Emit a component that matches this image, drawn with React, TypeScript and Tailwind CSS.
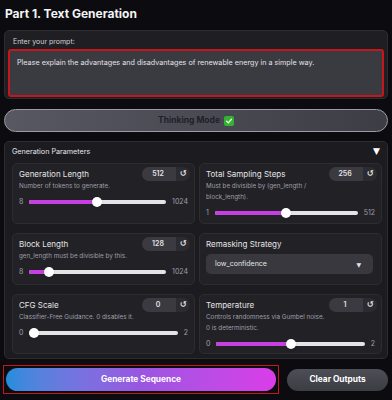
const font = { fontFamily: 'Inter, "Noto Sans", sans-serif' };

function NumPill({ value }: { value: string }) {
  return (
    <div className="flex h-[14px] w-[48px] shrink-0 overflow-hidden rounded-full text-[7px] font-semibold text-zinc-200">
      <div className="flex flex-1 items-center justify-center bg-[#3a3a40] pr-[2px]">{value}</div>
      <div className="flex w-[14px] items-center justify-center bg-[#2b2b30] text-[8px]" style={{ fontFamily: '"DejaVu Sans", sans-serif' }}>
        ↺
      </div>
    </div>
  );
}

function Slider({ min, max, value }: { min: string; max: string; value: number }) {
  return (
    <div className="flex h-[10px] items-center gap-[6px] text-[7px] text-zinc-400">
      <span>{min}</span>
      <div className="relative h-[10px] flex-1">
        <div className="absolute inset-x-0 top-[3px] h-[4px] rounded-full bg-[#e4e4e7]" />
        <div
          className="absolute left-0 top-[3px] h-[4px] rounded-full bg-[#c63fe0]"
          style={{ width: `calc(5px + ${value} * (100% - 10px))` }}
        />
        <div
          className="absolute top-0 h-[10px] w-[10px] rounded-full bg-white shadow"
          style={{ left: `calc(${value} * (100% - 10px))` }}
        />
      </div>
      <span>{max}</span>
    </div>
  );
}

function ParamCard({
  title,
  desc,
  pill,
  slider,
}: {
  title: string;
  desc: string[];
  pill: string;
  slider: { min: string; max: string; value: number };
}) {
  return (
    <div className="rounded-[5px] border border-[#2c2c31] bg-[#222226] pl-[6px] pr-[4px] pt-[3px]">
      <div className="flex h-[14px] items-center justify-between">
        <div className="text-[8px] text-zinc-200">{title}</div>
        <NumPill value={pill} />
      </div>
      <div className="mt-[0px] text-[6.3px] leading-[11px] text-zinc-400">
        {desc.map((d) => (
          <div key={d}>{d}</div>
        ))}
      </div>
      <div className="mt-[5px] pr-[2px]">
        <Slider {...slider} />
      </div>
    </div>
  );
}

export default function App() {
  return (
    <main className="min-h-[400px] w-[392px] bg-[#0c0c10] px-[4px] pt-[6px]" style={font}>
      <h1 className="pl-[1px] text-[12px] font-bold leading-[16px] text-zinc-100">Part 1. Text Generation</h1>

      <div className="mt-[8px] rounded-[5px] border border-[#2c2c31] bg-[#1f1f23] px-[3px] pb-[1px] pt-[6px]">
        <div className="pl-[5px] text-[7px] leading-[10px] text-zinc-300">Enter your prompt:</div>
        <div className="mt-[2px] h-[48px] rounded-[3px] border-2 border-[#c4161c] bg-[#3a3a41] px-[7px] pt-[7px] text-[7.2px] text-zinc-200">
          Please explain the advantages and disadvantages of renewable energy in a simple way.
        </div>
      </div>

      <div className="mt-[10px] flex h-[23px] items-center justify-center rounded-full border border-[#9b9ba5] bg-gradient-to-r from-[#585862] to-[#3d3d45] text-[8.5px] font-bold text-[#1f1f28]">
        Thinking Mode
        <span className="ml-[4px] inline-flex h-[10px] w-[10px] items-center justify-center rounded-[2px] bg-[#34b233]">
          <svg viewBox="0 0 10 10" className="h-[8px] w-[8px]">
            <path d="M2 5.2 L4.2 7.3 L8 2.8" fill="none" stroke="white" strokeWidth="1.6" strokeLinecap="round" strokeLinejoin="round" />
          </svg>
        </span>
      </div>

      <div className="mt-[9px] h-[218px] rounded-[5px] border border-[#2c2c31] bg-[#1c1c20] pl-[7px] pr-[5px] pt-[5px]">
        <div className="flex h-[10px] items-center justify-between pr-[2px]">
          <span className="text-[7.2px] text-zinc-200">Generation Parameters</span>
          <span className="text-[9px] text-white" style={{ fontFamily: '"DejaVu Sans", sans-serif' }}>▼</span>
        </div>

        <div className="mt-[6px] grid grid-cols-2 gap-x-[4px] gap-y-[9px] [grid-template-rows:61px_52px_60px]">
          <ParamCard
            title="Generation Length"
            desc={["Number of tokens to generate."]}
            pill="512"
            slider={{ min: "8", max: "1024", value: 0.496 }}
          />
          <ParamCard
            title="Total Sampling Steps"
            desc={["Must be divisible by (gen_length /", "block_length)."]}
            pill="256"
            slider={{ min: "1", max: "512", value: 0.499 }}
          />
          <ParamCard
            title="Block Length"
            desc={["gen_length must be divisible by this."]}
            pill="128"
            slider={{ min: "8", max: "1024", value: 0.118 }}
          />
          <div className="rounded-[5px] border border-[#2c2c31] bg-[#222226] pl-[6px] pr-[8px] pt-[5px]">
            <div className="text-[8px] leading-[10px] text-zinc-200">Remasking Strategy</div>
            <div className="mt-[5px] flex h-[20px] items-center justify-between rounded-[5px] bg-[#38383e] pl-[9px] pr-[12px] text-[7px] text-zinc-200">
              <span>low_confidence</span>
              <span className="text-[6px]" style={{ fontFamily: '"DejaVu Sans", sans-serif' }}>▼</span>
            </div>
          </div>
          <ParamCard
            title="CFG Scale"
            desc={["Classifier-Free Guidance. 0 disables it."]}
            pill="0"
            slider={{ min: "0", max: "2", value: 0 }}
          />
          <ParamCard
            title="Temperature"
            desc={["Controls randomness via Gumbel noise.", "0 is deterministic."]}
            pill="1"
            slider={{ min: "0", max: "2", value: 0.5 }}
          />
        </div>
      </div>

      <div className="mt-[6px] flex items-center gap-[8px]">
        <div className="ml-[-1px] w-[276px] border border-[#c4161c] p-[2px]">
          <button className="flex h-[23px] w-full items-center justify-center rounded-full bg-gradient-to-r from-[#1f8ddc] via-[#9a55e2] to-[#db3ce8] text-[8.3px] font-bold text-white">
            Generate Sequence
          </button>
        </div>
        <button className="flex h-[22px] flex-1 items-center justify-center rounded-full bg-gradient-to-b from-[#4e4e56] to-[#3c3c43] text-[8.3px] font-bold text-white">
          Clear Outputs
        </button>
      </div>
    </main>
  );
}
